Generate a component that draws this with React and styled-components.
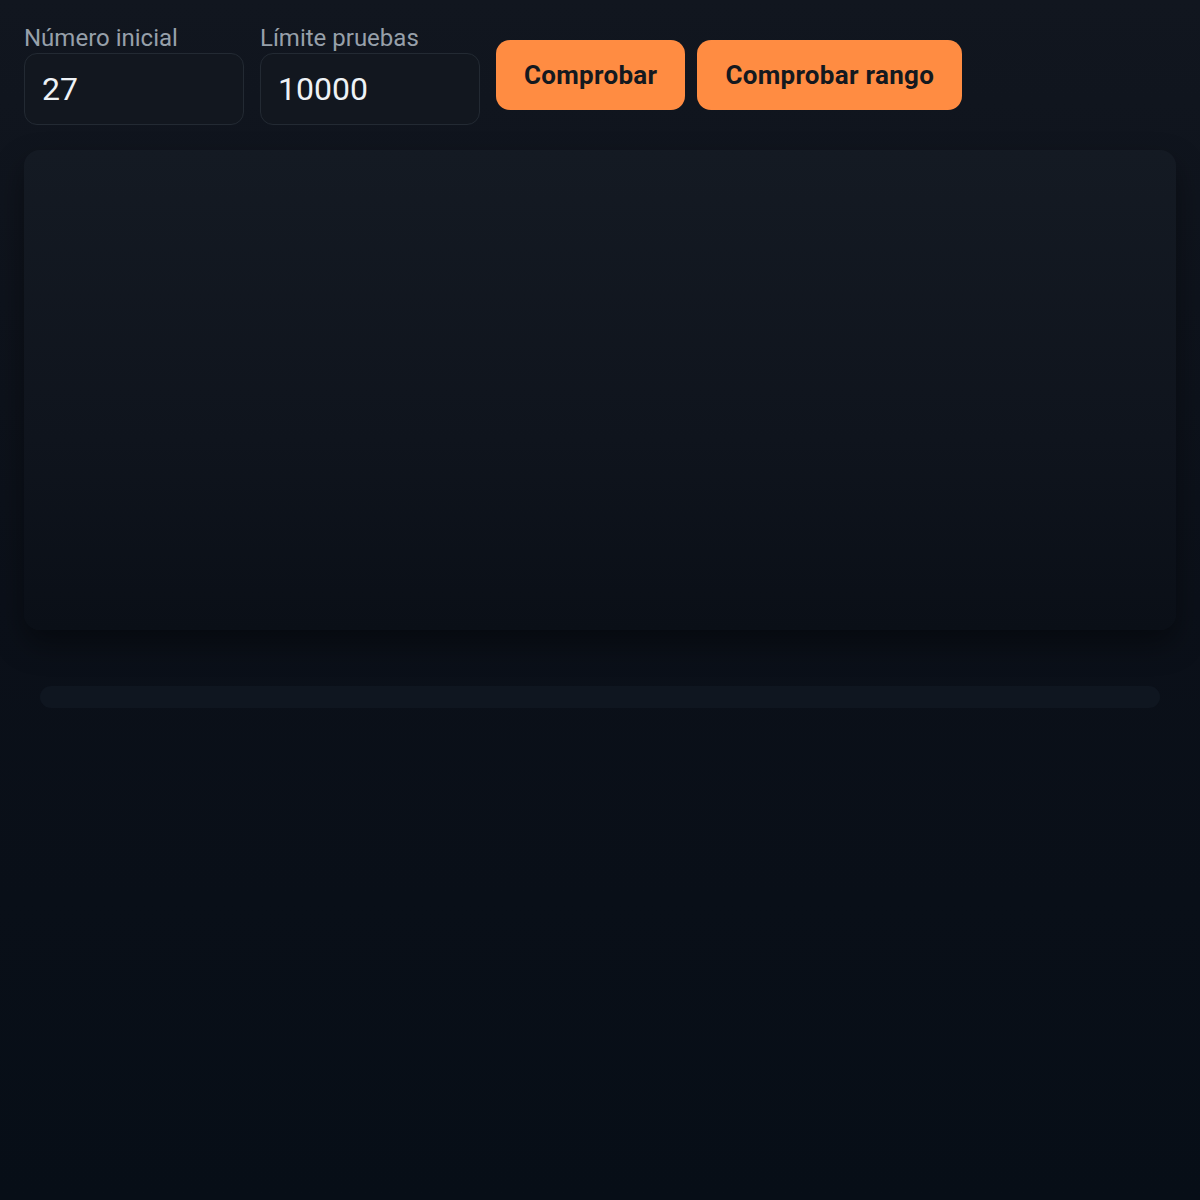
import React, { useState } from 'react';
import styled, { createGlobalStyle } from 'styled-components';

const GlobalStyle = createGlobalStyle`
  html, body {
    margin: 0;
    padding: 0;
    min-height: 100%;
  }
  body {
    min-height: 1200px;
    background: linear-gradient(180deg, #11161f 0%, #0b1019 50%, #070e17 100%);
    font-family: Roboto, "Noto Sans", sans-serif;
    color: #e6edf3;
  }
`;

const Page = styled.div`
  padding: 24px;
  display: flex;
  flex-direction: column;
`;

const Controls = styled.div`
  display: flex;
  align-items: center;
  gap: 16px;
`;

const Field = styled.label`
  display: flex;
  flex-direction: column;
  gap: 1px;
`;

const FieldLabel = styled.span`
  font-size: 24px;
  line-height: 28px;
  color: #97a0aa;
`;

const NumberInput = styled.input`
  box-sizing: border-box;
  width: 220px;
  height: 72px;
  padding: 0 17px;
  border: 1px solid #232a33;
  border-radius: 13px;
  background: #12171f;
  color: #eef2f6;
  font-family: inherit;
  font-size: 32px;
  outline: none;
`;

const Buttons = styled.div`
  display: flex;
  gap: 12px;
`;

const ActionButton = styled.button`
  height: 70px;
  padding: 0 28px;
  border: none;
  border-radius: 14px;
  background: #ff8c42;
  color: #14191f;
  font-family: inherit;
  font-size: 26px;
  font-weight: 700;
  letter-spacing: 0.3px;
  cursor: pointer;
`;

const ChartCard = styled.div`
  margin-top: 25px;
  height: 480px;
  border-radius: 16px;
  background: linear-gradient(180deg, #141a23 0%, #0f141d 60%, #0a0f17 100%);
  box-shadow: 0 14px 30px rgba(0, 0, 0, 0.4);
`;

const ProgressTrack = styled.div`
  margin: 56px 16px 0;
  height: 22px;
  border-radius: 11px;
  background: #0f1620;
`;

export default function App() {
  const [start, setStart] = useState('27');
  const [limit, setLimit] = useState('10000');

  return (
    <>
      <GlobalStyle />
      <Page>
        <Controls>
          <Field>
            <FieldLabel>Número inicial</FieldLabel>
            <NumberInput value={start} onChange={e => setStart(e.target.value)} />
          </Field>
          <Field>
            <FieldLabel>Límite pruebas</FieldLabel>
            <NumberInput value={limit} onChange={e => setLimit(e.target.value)} />
          </Field>
          <Buttons>
            <ActionButton>Comprobar</ActionButton>
            <ActionButton>Comprobar rango</ActionButton>
          </Buttons>
        </Controls>
        <ChartCard />
        <ProgressTrack />
      </Page>
    </>
  );
}
